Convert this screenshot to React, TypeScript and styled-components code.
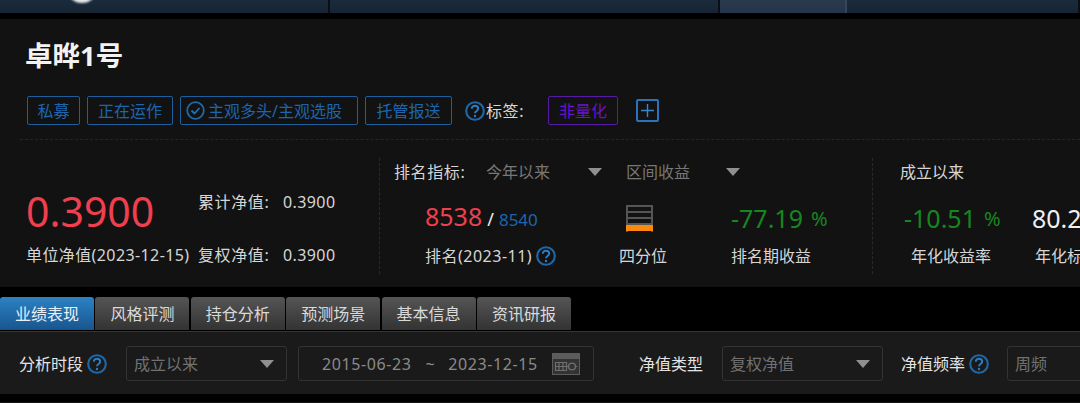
import React from 'react';
import styled, { createGlobalStyle } from 'styled-components';

const Global = createGlobalStyle`
  html, body { margin: 0; padding: 0; background: #000; }
  body { font-family: "Noto Sans", "Noto Sans CJK SC", sans-serif; overflow: hidden; }
  #root { width: 1080px; height: 403px; overflow: hidden; }
`;

const Page = styled.div`width: 1080px; height: 403px; overflow: hidden; background: #000; display: flex; flex-direction: column;`;

const TopBar = styled.div`height: 13px; flex: none; display: flex; margin-bottom: 6px;`;
const TopCell = styled.div<{ $w?: number; $active?: boolean }>`
  position: relative; box-sizing: border-box;
  flex: ${p => (p.$w ? `0 0 ${p.$w}px` : '1')};
  background: ${p => (p.$active ? 'linear-gradient(#2a3a4c, #22354a)' : 'linear-gradient(#1a2b3b, #142433)')};
  border-right: 2px solid ${p => (p.$active ? '#33465a' : '#0b0f14')};
  overflow: hidden;
`;
const Logo = styled.div`
  position: absolute; left: 66px; top: -30px; width: 32px; height: 33px; border-radius: 50%;
  background: #e4e8ea; filter: blur(1px);
`;

const Panel = styled.section`
  height: 268px; flex: none; background: #121212; display: flex; flex-direction: column; overflow: hidden;
`;
const Title = styled.h1`
  margin: 0; padding: 18px 0 0 25px; height: 57px; box-sizing: border-box;
  font-size: 27.5px; line-height: 38px; font-weight: 700; color: #f2f2f2;
`;
const TagRow = styled.div`display: flex; align-items: center; padding-left: 27px; height: 31px; margin-top: 19px;`;
const Tag = styled.span<{ $purple?: boolean; $w: number; $mr: number }>`
  box-sizing: border-box; width: ${p => p.$w}px; margin-right: ${p => p.$mr}px; height: 29px;
  display: flex; align-items: center; justify-content: center; gap: 3px;
  border: 1px solid ${p => (p.$purple ? '#5a1aa8' : '#1d5f9e')}; border-radius: 2px;
  font-size: 16px; line-height: 20px; color: ${p => (p.$purple ? '#6a12c8' : '#1d66ae')};
  white-space: nowrap;
`;
const IconTag = styled(Tag)`justify-content: flex-start; padding-left: 5px;`;
const TagLabel = styled.span`font-size: 16px; line-height: 20px; letter-spacing: 0.6px; color: #d8d8d8; width: 62px; margin-left: 1px; white-space: nowrap;`;
const PlusBox = styled.span`
  box-sizing: border-box; width: 23px; height: 23px; margin-left: 18px; border: 2px solid #2c73b5; border-radius: 2px;
  display: flex; align-items: center; justify-content: center;
`;
const Dashed = styled.div`margin: 13px 0 0 20px; border-top: 1px dashed #262626; height: 0;`;

const Stats = styled.div`display: flex; margin-top: 18px; height: 116px;`;
const NavCol = styled.div`
  flex: 0 0 380px; box-sizing: border-box; padding: 25px 0 0 27px; border-right: 1px dashed #2a2a2a;
  display: grid; grid-template-columns: 171px 85px auto; grid-template-rows: 58px 28px; align-items: center;
`;
const BigNav = styled.div`font-size: 41px; line-height: 50px; color: #f03f4e; margin-top: -2px; margin-left: -1px;`;
const Lbl = styled.span`font-size: 16px; line-height: 20px; color: #d6d6d6; white-space: nowrap;`;
const DigitLbl = styled(Lbl)`letter-spacing: 0.4px;`;
const ColonLbl = styled(Lbl)`letter-spacing: 0.6px;`;
const RaisedLbl = styled(ColonLbl)`margin-top: -20px;`;
const RaisedDigit = styled(DigitLbl)`margin-top: -20px;`;
const DateLbl = styled(DigitLbl)`margin-left: -1px;`;

const RankCol = styled.div`
  flex: 0 0 493px; box-sizing: border-box; padding-left: 14px; border-right: 1px dashed #2a2a2a;
  display: flex; flex-direction: column;
`;
const RankHead = styled.div`display: flex; align-items: center; height: 28px;`;
const HeadCap = styled(ColonLbl)`width: 92px;`;
const HeadDrop = styled.div<{ $w: number }>`
  width: ${p => p.$w}px; display: flex; justify-content: space-between; align-items: center;
  font-size: 16px; line-height: 20px; color: #777; margin-right: 24px;
`;
const Arrow = styled.i`
  display: block; width: 0; height: 0; flex: none;
  border-left: 7px solid transparent; border-right: 7px solid transparent; border-top: 8px solid #909090;
`;
const RankBody = styled.div`display: flex; margin-top: 12px;`;
const Metric = styled.div<{ $w: number; $pl?: number }>`
  flex: 0 0 ${p => p.$w}px; box-sizing: border-box; padding-left: ${p => p.$pl ?? 0}px;
  display: flex; flex-direction: column;
`;
const MetricTop = styled.div`height: 40px; display: flex; align-items: center; white-space: nowrap;`;
const MetricFoot = styled(Lbl)<{ $pl?: number }>`
  margin-top: 8px; padding-left: ${p => p.$pl ?? 0}px; display: flex; align-items: center; gap: 4px;
`;
const DigitFoot = styled(MetricFoot)`letter-spacing: 0.5px;`;
const RankNums = styled.div`display: flex; align-items: baseline; line-height: 30px;`;
const Num = styled.span<{ $c: string; $s: number }>`font-size: ${p => p.$s}px; line-height: 30px; color: ${p => p.$c};`;
const Slash = styled.span`font-size: 18px; color: #eee; margin: 0 5px;`;
const Pct = styled.span`font-size: 20px; color: #16871f; margin-left: 8px;`;

const Quartile = styled.div`
  width: 27px; height: 27px; margin-left: 7px; box-sizing: border-box; display: flex; flex-direction: column;
  border: 2px solid #555; border-bottom: 0;
`;
const QLine = styled.div`flex: 1; border-bottom: 2px solid #555;`;
const QFill = styled.div`flex: 0 0 6px; margin: 0 -2px; background: #fb8a0b;`;

const SinceCol = styled.div`flex: 1; padding-left: 27px; display: flex; flex-direction: column; white-space: nowrap;`;
const SinceHead = styled(Lbl)`height: 28px; display: flex; align-items: center;`;
const SinceBody = styled(RankBody)`margin-left: -1px;`;

const TabsRow = styled.nav`
  height: 34px; margin-top: 10px; flex: none; display: flex; gap: 1.4px; align-items: flex-start;
`;
const Tab = styled.div<{ $active?: boolean }>`
  width: 94px; height: 33px; flex: none; border-radius: 3px 3px 0 0; display: flex; align-items: center; justify-content: center;
  font-size: 16px; line-height: 20px; color: ${p => (p.$active ? '#e8f0f8' : '#dadada')};
  background: ${p => (p.$active ? 'linear-gradient(#2c82c4, #18558f)' : 'linear-gradient(#555, #333)')};
`;
const FilterBar = styled.div`
  height: 63px; flex: none; background: #1a1a1a; border-top: 1px solid #1b3a5c; box-sizing: border-box;
  display: flex; align-items: center; padding: 1px 0 0 19px; white-space: nowrap;
`;
const FLabel = styled.span<{ $mr: number }>`
  font-size: 16px; line-height: 20px; color: #e4e4e4; margin-right: ${p => p.$mr}px;
  display: flex; align-items: center; gap: 4px; flex: none;
`;
const Field = styled.div<{ $w: number; $mr: number }>`
  box-sizing: border-box; flex: none; width: ${p => p.$w}px; height: 35px; margin-right: ${p => p.$mr}px;
  border: 1px solid #333; border-radius: 3px; display: flex; align-items: center; justify-content: space-between;
  padding: 0 12px 0 7px; font-size: 16px; line-height: 20px; color: #717171;
`;
const DateField = styled(Field)`padding: 0 13px 0 23px; color: #8a8a8a; justify-content: flex-start; letter-spacing: 0.6px;`;
const Tilde = styled.span`margin: 0 13px 0 14px;`;
const CalWrap = styled.span`margin-left: auto; display: flex;`;
const BottomEdge = styled.div`height: 1px; margin-top: 8px; flex: none; background: #161616;`;

const Help = ({ size = 20 }: { size?: number }) => (
  <svg width={size} height={size} viewBox="0 0 20 20" fill="none">
    <circle cx="10" cy="10" r="8.8" stroke="#1f68a8" strokeWidth="2.1" />
    <path d="M6.8 7.8c0-1.9 1.4-3 3.2-3s3.2 1.1 3.2 2.8c0 2.4-3.2 2.3-3.2 4.6" stroke="#2c7cc4" strokeWidth="2" fill="none" />
    <circle cx="10" cy="15" r="1.2" fill="#2c7cc4" />
  </svg>
);

const Check = () => (
  <svg width="19" height="19" viewBox="0 0 19 19" fill="none">
    <circle cx="9.5" cy="9.5" r="8.3" stroke="#1f68a8" strokeWidth="1.8" />
    <path d="M5.5 9.5l3 3 5-5.5" stroke="#2470b4" strokeWidth="1.8" fill="none" />
  </svg>
);

const Plus = () => (
  <svg width="15" height="15" viewBox="0 0 15 15"><path d="M7.5 1v13M1 7.5h13" stroke="#3a86cc" strokeWidth="1.4" /></svg>
);

const Calendar = () => (
  <svg width="28" height="22" viewBox="0 0 28 22">
    <rect width="28" height="22" fill="#5c5c5c" />
    <rect x="1" y="6" width="26" height="15" fill="#333" />
    <path d="M3.5 9.5h11v8h-11zM3.5 13.5h11M7 9.5v8M11 9.5v8" stroke="#6e6e6e" strokeWidth="1.2" fill="none" />
    <circle cx="20" cy="13.5" r="3.4" fill="none" stroke="#6e6e6e" strokeWidth="1.4" />
    <path d="M14.5 13.5h2M23.4 13.5h2" stroke="#6e6e6e" strokeWidth="1.2" />
  </svg>
);

export default function App() {
  return (
    <Page>
      <Global />
      <TopBar>
        <TopCell $w={330}><Logo /></TopCell>
        <TopCell $w={390} />
        <TopCell $w={127} $active />
        <TopCell />
      </TopBar>
      <Panel>
        <Title>卓晔1号</Title>
        <TagRow>
          <Tag $w={53} $mr={7}>私募</Tag>
          <Tag $w={86} $mr={7}>正在运作</Tag>
          <IconTag $w={178} $mr={7}><Check />主观多头/主观选股</IconTag>
          <Tag $w={87} $mr={13}>托管报送</Tag>
          <Help />
          <TagLabel>标签:</TagLabel>
          <Tag $purple $w={70} $mr={0}>非量化</Tag>
          <PlusBox><Plus /></PlusBox>
        </TagRow>
        <Dashed />
        <Stats>
          <NavCol>
            <BigNav>0.3900</BigNav>
            <RaisedLbl>累计净值:</RaisedLbl>
            <RaisedDigit>0.3900</RaisedDigit>
            <DateLbl>单位净值(2023-12-15)</DateLbl>
            <ColonLbl>复权净值:</ColonLbl>
            <DigitLbl>0.3900</DigitLbl>
          </NavCol>
          <RankCol>
            <RankHead>
              <HeadCap>排名指标:</HeadCap>
              <HeadDrop $w={116}>今年以来<Arrow /></HeadDrop>
              <HeadDrop $w={114}>区间收益<Arrow /></HeadDrop>
            </RankHead>
            <RankBody>
              <Metric $w={225} $pl={31}>
                <MetricTop>
                  <RankNums>
                    <Num $c="#f03f4e" $s={25}>8538</Num><Slash>/</Slash><Num $c="#1d66ae" $s={17}>8540</Num>
                  </RankNums>
                </MetricTop>
                <DigitFoot>排名(2023-11)<Help /></DigitFoot>
              </Metric>
              <Metric $w={112}>
                <MetricTop><Quartile><QLine /><QLine /><QLine /><QFill /></Quartile></MetricTop>
                <MetricFoot>四分位</MetricFoot>
              </Metric>
              <Metric $w={140}>
                <MetricTop><Num $c="#16871f" $s={25}>-77.19</Num><Pct>%</Pct></MetricTop>
                <MetricFoot>排名期收益</MetricFoot>
              </Metric>
            </RankBody>
          </RankCol>
          <SinceCol>
            <SinceHead>成立以来</SinceHead>
            <SinceBody>
              <Metric $w={133} $pl={5}>
                <MetricTop><Num $c="#16871f" $s={25}>-10.51</Num><Pct>%</Pct></MetricTop>
                <MetricFoot $pl={7}>年化收益率</MetricFoot>
              </Metric>
              <Metric $w={100}>
                <MetricTop><Num $c="#f0f0f0" $s={25}>80.25</Num></MetricTop>
                <MetricFoot $pl={3}>年化标准差</MetricFoot>
              </Metric>
            </SinceBody>
          </SinceCol>
        </Stats>
      </Panel>
      <TabsRow>
        <Tab $active>业绩表现</Tab>
        <Tab>风格评测</Tab>
        <Tab>持仓分析</Tab>
        <Tab>预测场景</Tab>
        <Tab>基本信息</Tab>
        <Tab>资讯研报</Tab>
      </TabsRow>
      <FilterBar>
        <FLabel $mr={19}>分析时段<Help /></FLabel>
        <Field $w={161} $mr={11}>成立以来<Arrow /></Field>
        <DateField $w={296} $mr={45}>2015-06-23<Tilde>~</Tilde>2023-12-15<CalWrap><Calendar /></CalWrap></DateField>
        <FLabel $mr={19}>净值类型</FLabel>
        <Field $w={161} $mr={18}>复权净值<Arrow /></Field>
        <FLabel $mr={18}>净值频率<Help /></FLabel>
        <Field $w={120} $mr={0}>周频</Field>
      </FilterBar>
      <BottomEdge />
    </Page>
  );
}
